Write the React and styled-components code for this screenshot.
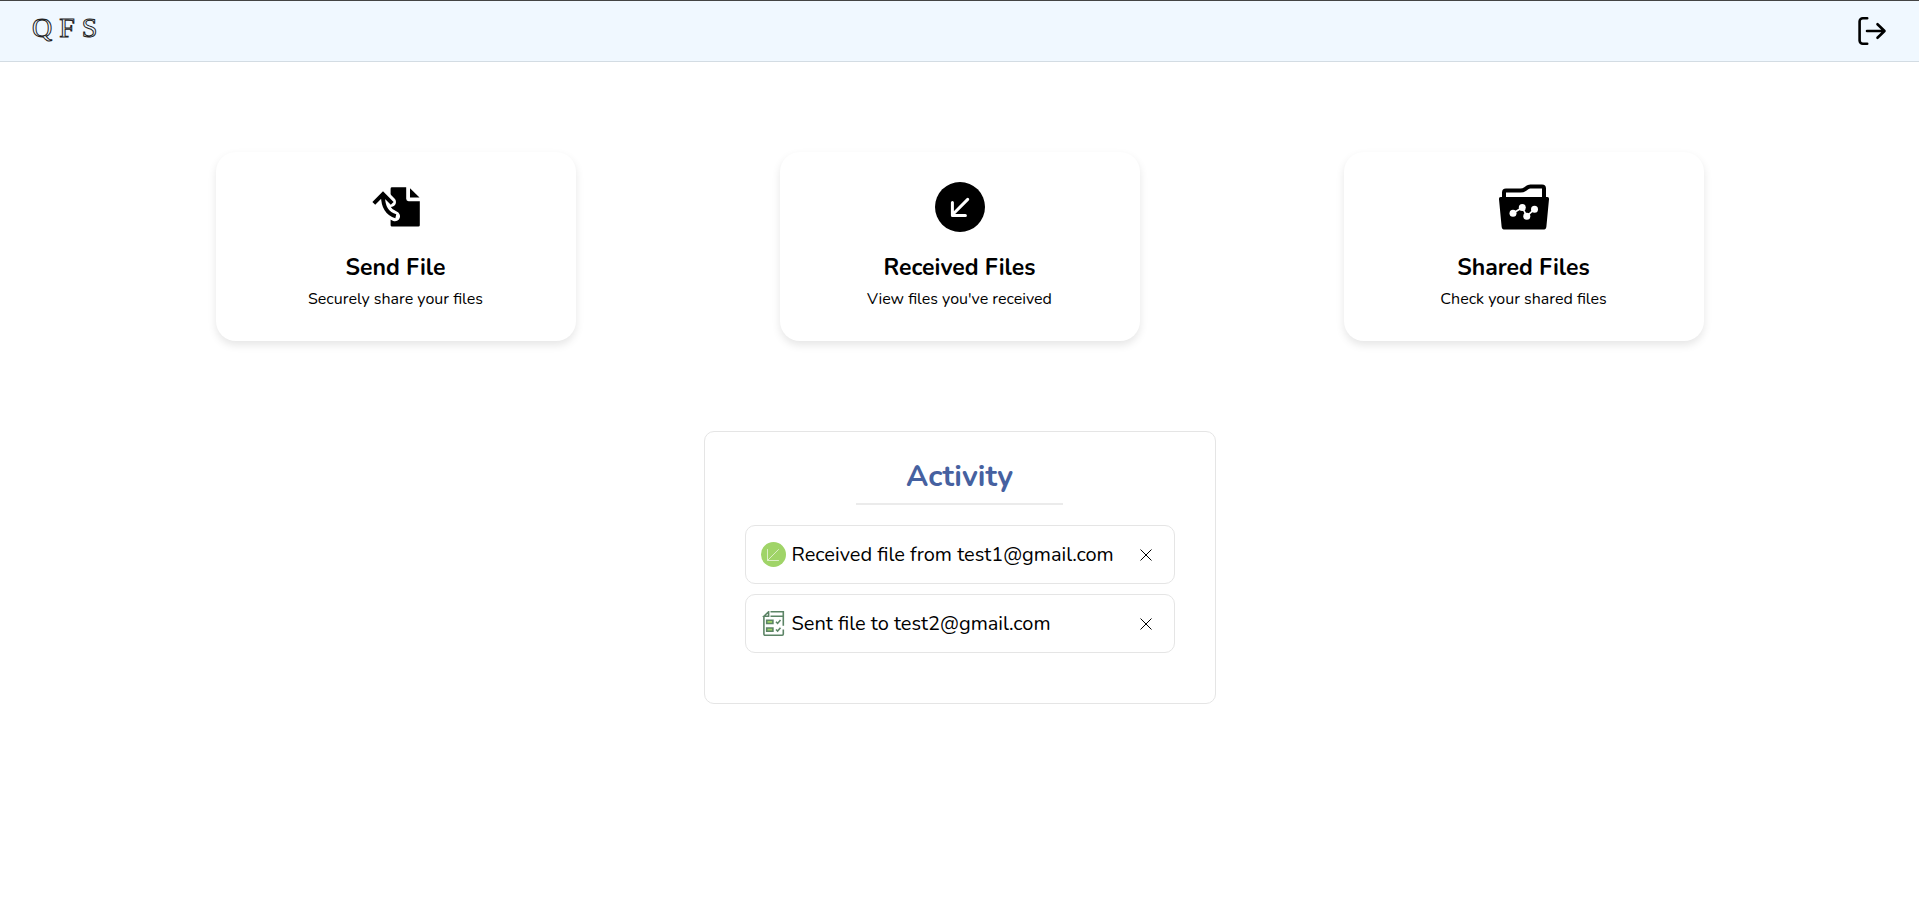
import React, { useState } from "react";
import styled, { createGlobalStyle } from "styled-components";

const GlobalStyle = createGlobalStyle`
  * { box-sizing: border-box; }
  body {
    margin: 0;
    background: #fff;
    color: #000;
    font-family: Nunito, Lato, "Open Sans", sans-serif;
  }
`;

const Header = styled.header`
  display: flex;
  align-items: center;
  justify-content: space-between;
  height: 62px;
  padding: 0 32px;
  background: #f0f8ff;
  border-top: 1px solid #444;
  border-bottom: 1px solid #d3dce3;
`;

const Logo = styled.a`
  padding-bottom: 6px;
  font-family: "Liberation Serif", serif;
  font-size: 28px;
  line-height: 32px;
  text-decoration: none;
  color: #f0f8ff;
  -webkit-text-stroke: 1px #222;
`;

const IconButton = styled.button`
  display: flex;
  align-items: center;
  justify-content: center;
  padding: 0;
  border: 0;
  background: none;
  color: #000;
  cursor: pointer;
`;

const Cards = styled.nav`
  display: flex;
  flex-wrap: wrap;
  justify-content: center;
  gap: 32px 204px;
  padding: 90px 12px;
`;

const Card = styled.a`
  display: flex;
  flex-direction: column;
  align-items: center;
  width: 360px;
  padding: 30px 20px;
  border-radius: 20px;
  box-shadow: 0 4px 8px rgba(0, 0, 0, 0.1);
  color: inherit;
  text-decoration: none;
`;

const CardTitle = styled.h2`
  margin: 20px 0 0;
  font-size: 23px;
  font-weight: 700;
  line-height: 32px;
`;

const CardText = styled.p`
  margin: 3px 0 0;
  font-size: 16px;
  line-height: 24px;
`;

const Panel = styled.section`
  display: flex;
  flex-direction: column;
  width: 512px;
  max-width: 100%;
  margin: 0 auto;
  padding: 25px 40px 50px;
  border: 1px solid #e5e5e5;
  border-radius: 10px;
`;

const PanelTitle = styled.h1`
  align-self: center;
  width: 48%;
  margin: 0 0 20px;
  padding-bottom: 6px;
  border-bottom: 2px solid #ebebeb;
  color: #4661a0;
  font-size: 30px;
  line-height: 40px;
  text-align: center;
`;

const List = styled.ul`
  display: flex;
  flex-direction: column;
  gap: 10px;
  margin: 0;
  padding: 0;
  list-style: none;
`;

const Item = styled.li`
  display: flex;
  align-items: center;
  gap: 6px;
  height: 59px;
  padding: 0 21px 0 15px;
  border: 1px solid #e5e5e5;
  border-radius: 10px;
`;

const ItemText = styled.span`
  flex: 1;
  font-size: 20px;
  line-height: 28px;
`;

function LogoutIcon() {
  return (
    <svg width="30" height="30" viewBox="0 0 30 30" fill="none" stroke="currentColor" strokeWidth="2.6" strokeLinecap="round" strokeLinejoin="round">
      <path d="M10.200 2.200H5.800a3.200 3.200 0 0 0-3.200 3.200v19.200a3.200 3.200 0 0 0 3.200 3.200h4.400M10 15h17M20.500 8.200L27.500 15l-7 6.800" />
    </svg>
  );
}

function SendIcon() {
  return (
    <svg width="50" height="50" viewBox="0 0 50 50" fill="none">
      <path fill="#000" d="M21 5.300h14.200v11.500a2.400 2.400 0 0 0 2.400 2.400h11.200v24a1.400 1.400 0 0 1-1.400 1.400H21a1.400 1.400 0 0 1-1.400-1.400V6.700A1.400 1.400 0 0 1 21 5.300z" />
      <path fill="#000" d="M39 6.300l9.500 9.200H39z" />
      <path stroke="#fff" strokeWidth="10" strokeLinecap="round" d="M4.500 19l7.300-7.200 8.200 8.200M11.800 14c0 11 4.500 17.500 12.200 20.300" />
      <path stroke="#000" strokeWidth="4" d="M2.800 21.400l9.200-9.200 9.200 9.200M12 14c0 10.500 4.500 18.200 12.800 20.200" />
    </svg>
  );
}

function ReceivedIcon() {
  return (
    <svg width="50" height="50" viewBox="0 0 50 50" fill="none">
      <circle cx="25" cy="25" r="25" fill="#000" />
      <path stroke="#fff" strokeWidth="3" strokeLinecap="round" strokeLinejoin="round" d="M32.700 17.400L17.400 32.700M17.400 20.500v13h13" />
    </svg>
  );
}

function SharedIcon() {
  return (
    <svg width="50" height="50" viewBox="0 0 50 50" fill="none">
      <path stroke="#000" strokeWidth="4" strokeLinejoin="round" d="M5 18V10.500a2 2 0 0 1 2-2h14.500c2 0 3.500-.6 5-1.700l1.600-1.200c1-.8 2-1.100 3.200-1.100H43a2 2 0 0 1 2 2V18" />
      <path fill="#000" d="M2 15h46a2 2 0 0 1 2 2.200l-2.600 27.200a3.500 3.500 0 0 1-3.500 3.200H6.100a3.500 3.500 0 0 1-3.500-3.200L0 17.200A2 2 0 0 1 2 15z" />
      <path stroke="#fff" strokeWidth="1.600" d="M14 31.300l9.300-5.800 4.500 8.700 7.700-7" />
      <g fill="#fff">
        <circle cx="14" cy="31.300" r="3.500" />
        <circle cx="23.300" cy="25.500" r="3.500" />
        <circle cx="27.800" cy="34.200" r="3.500" />
        <circle cx="35.500" cy="27.200" r="3.500" />
      </g>
    </svg>
  );
}

function ReceivedBadge() {
  return (
    <svg width="25" height="25" viewBox="0 0 25 25" fill="none">
      <circle cx="12.500" cy="12.500" r="12.500" fill="#a0d468" />
      <path stroke="#dcefc6" strokeWidth="1" strokeLinecap="round" d="M17.500 7.500l-11 11M6.500 7.500v11h11" />
    </svg>
  );
}

function SentBadge() {
  return (
    <svg width="25" height="25" viewBox="0 0 25 25" fill="none" stroke="#5c8466" strokeWidth="1.600">
      <path d="M9.500.8h12.800v4.500H9.500M3 5.300h4.600V.8zM2.900 5v18.100a1.100 1.100 0 0 0 1.100 1.100h17.200a1.100 1.100 0 0 0 1.100-1.100V18.500M22.300 5.300v9.500" />
      <path fill="#a0d468" d="M5.700 9.300h6.200v3.200H5.700zM5.700 17h6.200v3.200H5.700z" />
      <path d="M15 10.800l1.600 1.600 2.900-3.400M15 18.500l1.600 1.600 2.900-3.400" />
    </svg>
  );
}

function CloseIcon() {
  return (
    <svg width="14" height="14" viewBox="0 0 14 14" stroke="currentColor" strokeWidth="1">
      <path d="M1.500 1.500l11 11M12.500 1.500l-11 11" />
    </svg>
  );
}

const sections = [
  { title: "Send File", text: "Securely share your files", Icon: SendIcon },
  { title: "Received Files", text: "View files you've received", Icon: ReceivedIcon },
  { title: "Shared Files", text: "Check your shared files", Icon: SharedIcon },
];

const initialActivity = [
  { id: 1, text: "Received file from test1@gmail.com", Icon: ReceivedBadge },
  { id: 2, text: "Sent file to test2@gmail.com", Icon: SentBadge },
];

export default function App() {
  const [activity, setActivity] = useState(initialActivity);
  const dismiss = (id) => setActivity((items) => items.filter((item) => item.id !== id));

  return (
    <>
      <GlobalStyle />
      <Header>
        <Logo href="#">Q F S</Logo>
        <IconButton type="button" aria-label="Log out">
          <LogoutIcon />
        </IconButton>
      </Header>
      <main>
        <Cards>
          {sections.map(({ title, text, Icon }) => (
            <Card key={title} href="#">
              <Icon />
              <CardTitle>{title}</CardTitle>
              <CardText>{text}</CardText>
            </Card>
          ))}
        </Cards>
        <Panel>
          <PanelTitle>Activity</PanelTitle>
          <List>
            {activity.map(({ id, text, Icon }) => (
              <Item key={id}>
                <Icon />
                <ItemText>{text}</ItemText>
                <IconButton type="button" aria-label="Dismiss" onClick={() => dismiss(id)}>
                  <CloseIcon />
                </IconButton>
              </Item>
            ))}
          </List>
        </Panel>
      </main>
    </>
  );
}
